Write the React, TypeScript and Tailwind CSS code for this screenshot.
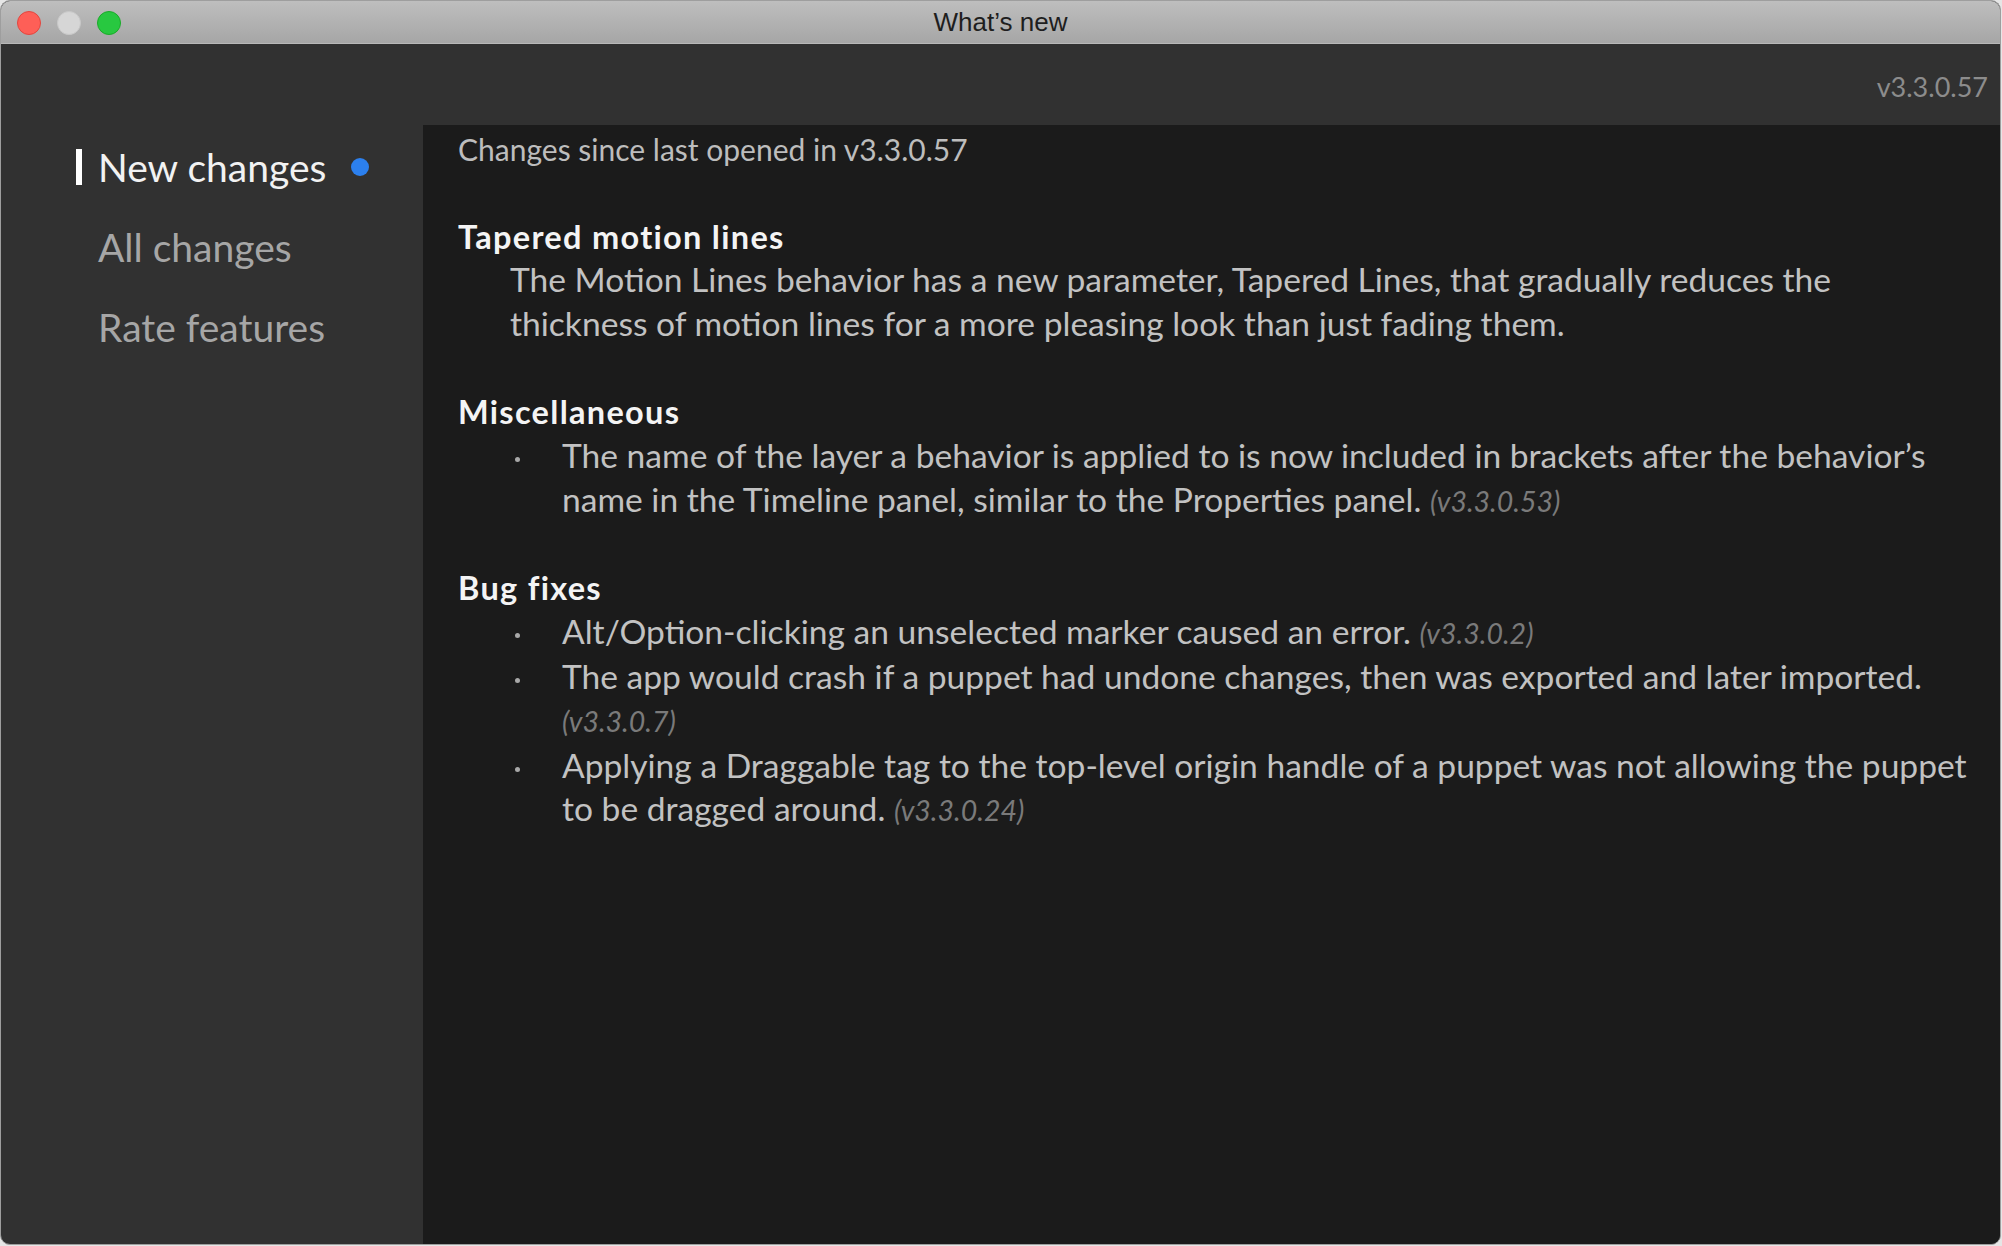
import React from "react";

const NAV = [
  { label: "New changes", active: true },
  { label: "All changes", active: false },
  { label: "Rate features", active: false },
];

function Ver({ v }: { v: string }) {
  return <span className="text-[28.5px] italic text-[#7a7a7a]">({v})</span>;
}

function Bullet({ children }: { children: React.ReactNode }) {
  return (
    <li className="flex">
      <span className="w-[47px] shrink-0">
        <span className="mt-[23px] block h-[5px] w-[5px] rounded-full bg-[#a8a8a8]" />
      </span>
      <span className="whitespace-nowrap">{children}</span>
    </li>
  );
}

export default function App() {
  return (
    <div className="h-[1246px] w-[2002px] bg-[#e6e6e6]">
      <div className="flex h-[1245px] w-[2001px] flex-col overflow-hidden rounded-[10px] border border-[#9e9e9e] bg-[#313131] font-[Lato,sans-serif]">
        {/* title bar */}
        <div className="relative flex h-[43px] shrink-0 items-center justify-center border-b border-[#b8b8b8] bg-linear-to-b from-[#bebebe] to-[#a6a6a6]">
          <div className="absolute left-[16px] top-[10px] flex gap-[16px]">
            <span className="h-[24px] w-[24px] rounded-full border border-[#e2463f] bg-[#fe5f57]" />
            <span className="h-[24px] w-[24px] rounded-full border border-[#c8c8c8] bg-[#d6d6d6]" />
            <span className="h-[24px] w-[24px] rounded-full border border-[#1aab29] bg-[#28c840]" />
          </div>
          <span className="font-['Liberation_Sans',Arial,sans-serif] text-[26px] text-[#1e1e1e]">What’s new</span>
        </div>

        {/* version bar */}
        <div className="flex h-[81px] shrink-0 items-center justify-end pr-[12px] pt-[6px]">
          <span className="text-[27px] text-[#8c8c8c]">v3.3.0.57</span>
        </div>

        <div className="flex min-h-0 flex-1">
          {/* sidebar */}
          <nav className="w-[422px] shrink-0 pt-[2px]">
            {NAV.map((n) => (
              <div key={n.label} className="flex h-[80px] items-center pl-[75px]">
                <span className={"h-[36px] w-[6px] " + (n.active ? "bg-white" : "bg-transparent")} />
                <span
                  className={
                    "ml-[16px] text-[39px] leading-[80px] " +
                    (n.active ? "text-[#f2f2f2]" : "text-[#a6a6a6]")
                  }
                >
                  {n.label}
                </span>
                {n.active && <span className="ml-[25px] h-[18px] w-[18px] rounded-full bg-[#2c80ee]" />}
              </div>
            ))}
          </nav>

          {/* content */}
          <main className="flex-1 bg-[#1b1b1b] pl-[35px] pt-[3px] leading-[43.6px] text-[#c2c2c2]">
            <p className="text-[30px] text-[#bdbdbd]">Changes since last opened in v3.3.0.57</p>

            <h2 className="mt-[43px] text-[32.5px] font-bold tracking-[1.3px] text-[#f4f4f4]">Tapered motion lines</h2>
            <p className="whitespace-nowrap pl-[52px] text-[33.6px]">
              The Motion Lines behavior has a new parameter, Tapered Lines, that gradually reduces the
              <br />
              thickness of motion lines for a more pleasing look than just fading them.
            </p>

            <h2 className="mt-[45px] text-[32.5px] font-bold tracking-[1.3px] text-[#f4f4f4]">Miscellaneous</h2>
            <ul className="pl-[57px] text-[33.6px]">
              <Bullet>
                The name of the layer a behavior is applied to is now included in brackets after the behavior’s
                <br />
                name in the Timeline panel, similar to the Properties panel. <Ver v="v3.3.0.53" />
              </Bullet>
            </ul>

            <h2 className="mt-[43px] text-[32.5px] font-bold tracking-[1.3px] text-[#f4f4f4]">Bug fixes</h2>
            <ul className="pl-[57px] text-[33.6px] leading-[43.3px]">
              <Bullet>
                Alt/Option-clicking an unselected marker caused an error. <Ver v="v3.3.0.2" />
              </Bullet>
              <Bullet>
                The app would crash if a puppet had undone changes, then was exported and later imported.
                <br />
                <Ver v="v3.3.0.7" />
              </Bullet>
              <Bullet>
                Applying a Draggable tag to the top-level origin handle of a puppet was not allowing the puppet
                <br />
                to be dragged around. <Ver v="v3.3.0.24" />
              </Bullet>
            </ul>
          </main>
        </div>
      </div>
    </div>
  );
}
